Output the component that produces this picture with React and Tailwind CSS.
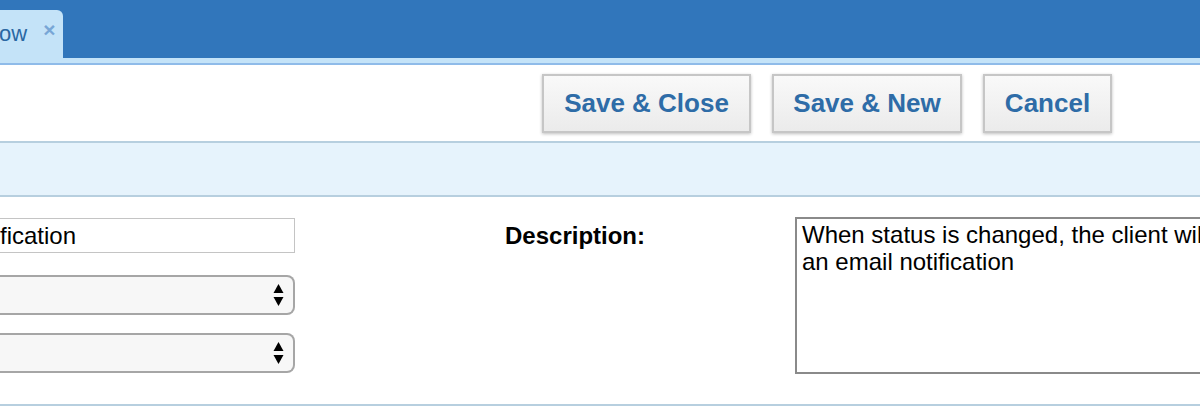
import React from 'react';

const SelectArrows = () => (
  <svg width="11" height="24" viewBox="0 0 11 24" className="shrink-0">
    <path d="M5.5 1 L10.5 10 L0.5 10 Z" fill="#000" />
    <path d="M0.5 14 L10.5 14 L5.5 23 Z" fill="#000" />
  </svg>
);

const FakeSelect = ({ className }) => (
  <div
    className={`h-[40px] w-[295px] flex items-center justify-end pr-[9px] bg-[#f7f7f7] border-2 border-l-0 border-[#a6a6a6] rounded-r-[8px] ${className}`}
  >
    <SelectArrows />
  </div>
);

const ToolbarButton = ({ children, className = '' }) => (
  <button
    type="button"
    className={`h-[59px] border-2 border-[#c6c6c6] bg-gradient-to-b from-[#f9f9f9] to-[#ebebeb] shadow-[0_1px_3px_rgba(0,0,0,0.25)] text-[26px] font-bold text-[#2e6ca7] leading-none ${className}`}
  >
    {children}
  </button>
);

export default function App() {
  return (
    <div className="w-[1200px] h-[408px] overflow-hidden bg-white font-['Liberation_Sans',Arial,sans-serif]">
      {/* top tab bar */}
      <div className="h-[58px] bg-[#3176bb] flex items-end">
        <div className="h-[48px] w-[63px] bg-[#c4e3f8] rounded-tr-[6px] flex items-start">
          <span className="mt-[13px] text-[22px] text-[#2a67a2] leading-none -ml-[1px]">ow</span>
          <span className="ml-[16px] mt-[9px] text-[21px] font-bold text-[#78a6d6] leading-none">×</span>
        </div>
      </div>
      <div className="h-[5px] bg-[#c4e3f8]" />
      <div className="h-[2px] bg-[#8fbbe9]" />

      {/* toolbar */}
      <div className="h-[76px] flex items-center justify-end gap-[21px] pr-[88px]">
        <ToolbarButton className="w-[209px]">Save &amp; Close</ToolbarButton>
        <ToolbarButton className="w-[190px]">Save &amp; New</ToolbarButton>
        <ToolbarButton className="w-[129px]">Cancel</ToolbarButton>
      </div>
      <div className="h-[2px] bg-[#b7cfdf]" />
      <div className="h-[52px] bg-[#e6f3fc]" />
      <div className="h-[2px] bg-[#b7cfdf]" />

      {/* form */}
      <div className="h-[207px] flex text-[24px] text-black">
        <div className="w-[505px] shrink-0 flex flex-col pt-[21px]">
          <div className="h-[35px] w-[295px] border border-l-0 border-[#c4c4c4] flex items-center leading-none">
            fication
          </div>
          <FakeSelect className="mt-[22px]" />
          <FakeSelect className="mt-[18px]" />
        </div>
        <div className="w-[290px] shrink-0 pt-[27px] font-bold leading-none">Description:</div>
        <div className="mt-[20px] h-[157px] w-[420px] shrink-0 border-2 border-[#8a8a8a] pl-[5px] pt-[2px] leading-[27px] whitespace-nowrap overflow-hidden">
          When status is changed, the client will receive
          <br />
          an email notification
        </div>
      </div>
      <div className="h-[2px] bg-[#b7cfdf]" />
    </div>
  );
}
